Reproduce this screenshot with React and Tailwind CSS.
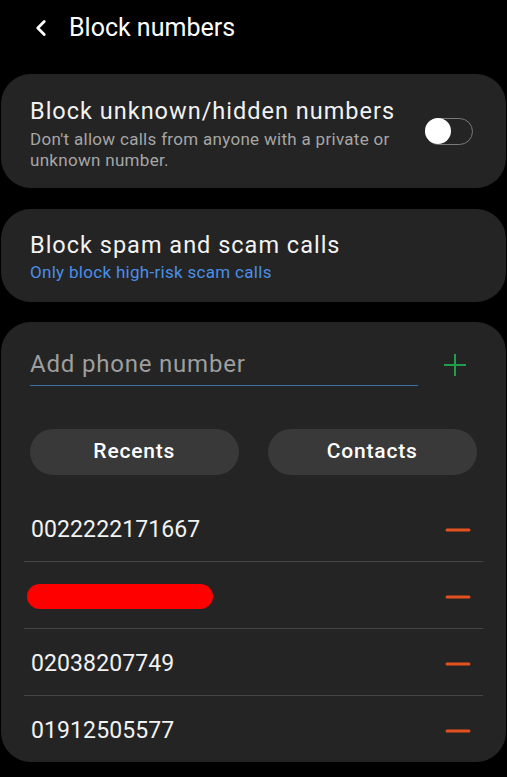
import { ChevronLeft } from 'lucide-react'

const numbers = ['0022222171667', null, '02038207749', '01912505577']

const Minus = () => (
  <svg width="26" height="6" viewBox="0 0 26 6" className="shrink-0">
    <line x1="2" y1="3" x2="24" y2="3" stroke="#e5501f" strokeWidth="3" strokeLinecap="round" />
  </svg>
)

const App = () => {
  return (
    <div
      className="w-[507px] h-[777px] bg-black text-[#f2f2f2] overflow-hidden px-px"
      style={{ fontFamily: 'Roboto, "Noto Sans", sans-serif' }}
    >
      {/* Header */}
      <div className="h-[74px] flex items-start pt-[12px]">
        <div className="flex items-center h-[32px]">
          <ChevronLeft className="ml-[27px] text-white" size={26} strokeWidth={2.6} />
          <span className="ml-[15px] text-[25px] leading-[32px] text-white">Block numbers</span>
        </div>
      </div>

      {/* Unknown numbers */}
      <div className="h-[114px] rounded-[30px] bg-[#242424] flex items-center pl-[29px] pr-[33px]">
        <div className="flex-1 pt-[6px]">
          <div className="text-[23.5px] leading-[28px] tracking-[1px]">Block unknown/hidden numbers</div>
          <div className="text-[17px] leading-[21px] text-[#a6a6a6] mt-[4px] tracking-[0.3px]">
            Don't allow calls from anyone with a private or
            <br />
            unknown number.
          </div>
        </div>
        <div className="w-[48px] h-[27px] rounded-full border-[1.5px] border-[#7a7a7a] flex items-center">
          <div className="w-[26px] h-[26px] rounded-full bg-white -ml-[1.5px]"></div>
        </div>
      </div>

      {/* Spam */}
      <div className="mt-[21px] h-[93px] rounded-[30px] bg-[#242424] flex flex-col justify-center pl-[29px] pt-[3px]">
        <div className="text-[23.5px] leading-[28px] tracking-[1px]">Block spam and scam calls</div>
        <div className="text-[17px] leading-[22px] text-[#4a8fe6] mt-[2px] tracking-[0.3px]">
          Only block high-risk scam calls
        </div>
      </div>

      {/* Block list */}
      <div className="mt-[20px] rounded-[30px] bg-[#242424] pt-[20px]">
        <div className="flex items-center pl-[29px] pr-[38px]">
          <div className="w-[388px] h-[44px] border-b-[1.5px] border-[#3d6fa8] flex items-center">
            <span className="text-[24px] leading-[32px] text-[#9e9e9e] tracking-[0.8px]">Add phone number</span>
          </div>
          <div className="flex-1 flex justify-end -mb-[1px]">
            <svg width="26" height="26" viewBox="0 0 26 26">
              <path d="M13 2v22M2 13h22" stroke="#1f9d4c" strokeWidth="2" />
            </svg>
          </div>
        </div>

        <div className="mt-[43px] flex gap-[29px] pl-[29px] pr-[29px]">
          <button className="w-[209px] h-[46px] rounded-full bg-[#393939] text-[21px] font-medium tracking-[0.8px] text-white">
            Recents
          </button>
          <button className="w-[210px] h-[46px] rounded-full bg-[#393939] text-[21px] font-medium tracking-[0.8px] text-white">
            Contacts
          </button>
        </div>

        <div className="mt-[20px] mx-[23px]">
          {numbers.map((n, i) => (
            <div
              key={i}
              className={`h-[66px] flex items-center justify-between pl-[7px] pr-[12px] pt-[3px] ${
                i < numbers.length - 1 ? 'border-b border-[#444444] h-[67px]' : ''
              }`}
            >
              {n ? (
                <span className="text-[23px] leading-[28px] tracking-[0.1px]">{n}</span>
              ) : (
                <div className="w-[186px] h-[25px] rounded-full bg-[#ff0000] -ml-[4px]"></div>
              )}
              <Minus />
            </div>
          ))}
        </div>
      </div>
    </div>
  )
}

export default App
